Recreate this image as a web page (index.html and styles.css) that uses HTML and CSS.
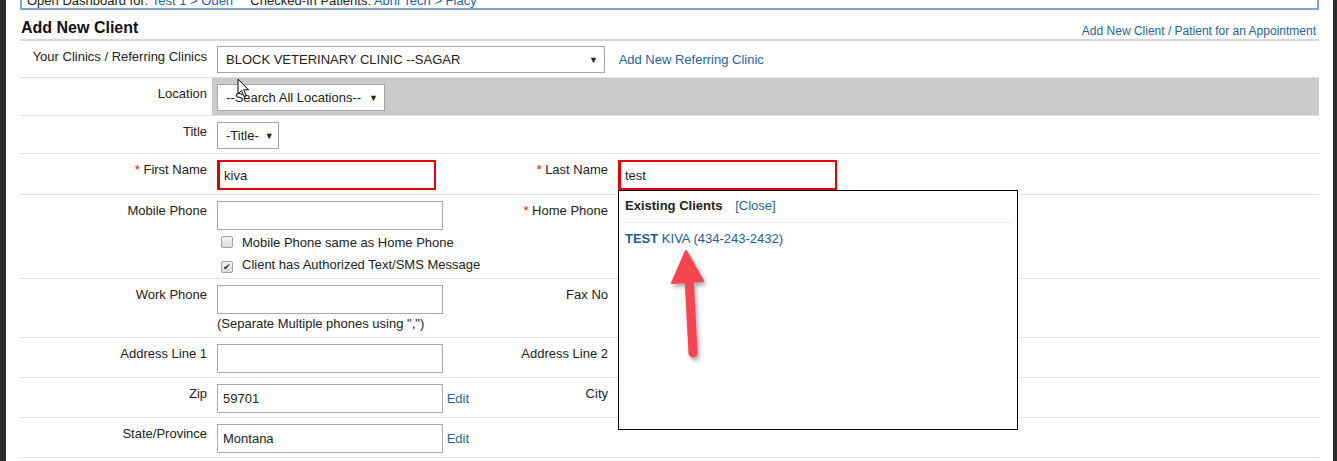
FILE: index.html
```html
<!DOCTYPE html>
<html lang="en">
<head>
    <meta charset="UTF-8">
    <meta name="viewport" content="width=device-width, initial-scale=1.0"/>
    <title>Add New Client</title>
    <link rel="stylesheet" href="styles.css">
</head>
<body>
<div class="page">
    <div class="dashboard-bar">
        Open Dashboard for: <a href="#">Test 1 &gt; Oden</a>
        <span class="gap"></span>
        Checked-In Patients: <a href="#">Abhi Tech &gt; Flacy</a>
    </div>

    <div class="title-bar">
        <h2>Add New Client</h2>
        <a href="#" class="small-link">Add New Client / Patient for an Appointment</a>
    </div>

    <table class="client-form">
        <colgroup>
            <col class="col-label">
            <col class="col-field">
            <col class="col-label2">
            <col>
        </colgroup>
        <tr class="first-row">
            <td class="label">Your Clinics / Referring Clinics</td>
            <td class="field" colspan="3">
                <span class="select clinic-select">BLOCK VETERINARY CLINIC --SAGAR<i>&#9660;</i></span>
                <a href="#" class="side-link">Add New Referring Clinic</a>
            </td>
        </tr>
        <tr>
            <td class="label">Location</td>
            <td class="field shaded" colspan="3">
                <span class="select location-select">--Search All Locations--<i>&#9660;</i></span>
            </td>
        </tr>
        <tr>
            <td class="label">Title</td>
            <td class="field" colspan="3">
                <span class="select title-select">-Title-<i>&#9660;</i></span>
            </td>
        </tr>
        <tr>
            <td class="label"><span class="req">*</span> First Name</td>
            <td class="field"><input type="text" class="text-input required" value="kiva"></td>
            <td class="label"><span class="req">*</span> Last Name</td>
            <td class="field">
                <div class="lookup">
                    <input type="text" class="text-input required" value="test">
                    <div class="lookup-popup">
                        <div class="lookup-head">
                            <b>Existing Clients</b>
                            <a href="#">[Close]</a>
                        </div>
                        <div class="lookup-item">
                            <a href="#"><b>TEST</b> KIVA (434-243-2432)</a>
                        </div>
                        <svg class="pointer-arrow" width="60" height="120" viewBox="0 0 60 120">
                            <line x1="20" y1="30" x2="24" y2="106" stroke="#f7444e" stroke-width="9" stroke-linecap="round"/>
                            <polygon points="17,4 3,36 34,34" fill="#f7444e" stroke="#f7444e" stroke-width="2" stroke-linejoin="round"/>
                        </svg>
                    </div>
                </div>
            </td>
        </tr>
        <tr>
            <td class="label">Mobile Phone</td>
            <td class="field">
                <input type="text" class="text-input wide">
                <div class="check-line first-check"><span class="checkbox"></span>Mobile Phone same as Home Phone</div>
                <div class="check-line last-check"><span class="checkbox checked">&#10004;</span>Client has Authorized Text/SMS Message</div>
            </td>
            <td class="label"><span class="req">*</span> Home Phone</td>
            <td class="field"></td>
        </tr>
        <tr>
            <td class="label">Work Phone</td>
            <td class="field">
                <input type="text" class="text-input wide">
                <div class="hint">(Separate Multiple phones using ",")</div>
            </td>
            <td class="label">Fax No</td>
            <td class="field"></td>
        </tr>
        <tr>
            <td class="label">Address Line 1</td>
            <td class="field"><input type="text" class="text-input wide"></td>
            <td class="label">Address Line 2</td>
            <td class="field"></td>
        </tr>
        <tr>
            <td class="label">Zip</td>
            <td class="field"><input type="text" class="text-input wide" value="59701"> <a href="#" class="edit-link">Edit</a></td>
            <td class="label">City</td>
            <td class="field"></td>
        </tr>
        <tr>
            <td class="label">State/Province</td>
            <td class="field"><input type="text" class="text-input wide" value="Montana"> <a href="#" class="edit-link">Edit</a></td>
            <td class="label"></td>
            <td class="field"></td>
        </tr>
    </table>

    <svg class="mouse-cursor" width="14" height="21" viewBox="0 0 14 21">
        <polygon points="1,1 1,16 4.5,12.5 7,18.5 9.2,17.6 6.8,11.8 11.5,11.8" fill="#fff" stroke="#000" stroke-width="1" stroke-linejoin="round"/>
    </svg>
</div>
</body>
</html>
```

FILE: styles.css
```css
html, body {
    margin: 0;
    height: 461px;
    overflow: hidden;
}
body {
    background-color: #2d2d2d;
    font-family: "Liberation Sans", Arial, sans-serif;
    font-size: 13px;
    color: #222;
}
a {
    color: #2763a0;
    text-decoration: none;
}
.page {
    position: relative;
    margin: 0 4px 0 6px;
    height: 461px;
    padding: 0 14px;
    background-color: #fff;
    overflow: hidden;
}
.dashboard-bar {
    margin-top: -15px;
    padding: 6px 5px 0;
    line-height: 15px;
    border: 2px solid #7fa7cc;
    white-space: nowrap;
}
.dashboard-bar .gap {
    display: inline-block;
    width: 10px;
}
.title-bar {
    display: flex;
    justify-content: space-between;
    align-items: flex-end;
    padding: 8px 3px 1px 1px;
    border-bottom: 2px solid #d7d7d7;
}
h2 {
    margin: 0;
    font-size: 16px;
    line-height: 20px;
    color: #111;
}
.small-link {
    font-size: 12px;
    line-height: 14px;
}
.client-form {
    width: 100%;
    table-layout: fixed;
    border-collapse: collapse;
}
.col-label {
    width: 192px;
}
.col-field {
    width: 288px;
}
.col-label2 {
    width: 113px;
}
.client-form td {
    vertical-align: top;
    padding: 6px 5px 4px;
    border-bottom: 1px solid #e1e1e1;
}
.client-form .first-row td {
    padding-top: 5px;
}
.client-form td.label {
    text-align: right;
    padding-top: 8px;
    line-height: 16px;
    white-space: nowrap;
}
.client-form td.shaded {
    background-color: #cbcbcb;
}
.req {
    color: #e01010;
}
.select {
    display: inline-flex;
    justify-content: space-between;
    align-items: center;
    box-sizing: border-box;
    height: 27px;
    padding: 0 6px 0 8px;
    border: 1px solid #a5a5a5;
    background-color: #fff;
    vertical-align: middle;
    white-space: nowrap;
}
.select i {
    font-style: normal;
    font-size: 9px;
    margin-left: 6px;
}
.clinic-select {
    width: 388px;
}
.location-select {
    width: 168px;
}
.title-select {
    width: 62px;
}
.side-link {
    margin-left: 10px;
    vertical-align: middle;
}
.text-input {
    box-sizing: border-box;
    height: 29px;
    padding: 0 5px;
    border: 1px solid #a9a9a9;
    font-family: inherit;
    font-size: 13px;
    color: #222;
    vertical-align: middle;
    margin: 0;
}
.text-input.wide {
    width: 226px;
}
.text-input.required {
    width: 219px;
    height: 30px;
    border: 2px solid #e60000;
    border-left-width: 3px;
    padding-left: 4px;
}
.edit-link {
    vertical-align: middle;
}
.check-line {
    line-height: 22px;
    white-space: nowrap;
}
.first-check {
    margin-top: 2px;
}
.last-check {
    margin-bottom: -2px;
}
.checkbox {
    display: inline-block;
    box-sizing: border-box;
    width: 12px;
    height: 12px;
    margin: 0 9px 0 4px;
    border: 1px solid #a0a0a0;
    border-radius: 2px;
    background: linear-gradient(#f4f4f4, #dcdcdc);
    vertical-align: -1px;
    font-size: 9px;
    line-height: 10px;
    text-align: center;
    color: #333;
}
.hint {
    line-height: 19px;
    white-space: nowrap;
}
.lookup {
    position: relative;
    display: inline-block;
}
.lookup-popup {
    position: absolute;
    top: 100%;
    left: 0;
    z-index: 5;
    box-sizing: border-box;
    width: 400px;
    height: 240px;
    padding: 0 5px;
    border: 1px solid #000;
    background-color: #fff;
}
.lookup-head {
    padding: 7px 1px 8px;
    line-height: 16px;
    border-bottom: 1px solid #ececec;
    white-space: nowrap;
}
.lookup-head a {
    margin-left: 9px;
}
.lookup-item {
    padding: 8px 1px;
    line-height: 16px;
}
.lookup-item a {
    color: #205d98;
}
.pointer-arrow {
    position: absolute;
    left: 50px;
    top: 56px;
    filter: drop-shadow(2px 3px 2px rgba(0, 0, 0, 0.35));
}
.mouse-cursor {
    position: absolute;
    left: 231px;
    top: 78px;
}
```
